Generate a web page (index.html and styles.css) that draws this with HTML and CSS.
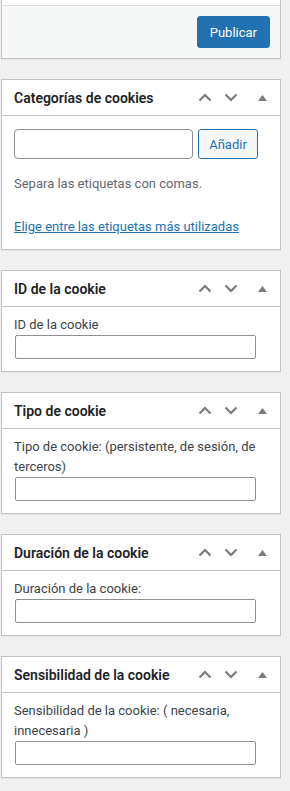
FILE: index.html
```html
<!DOCTYPE html>
<html lang="es">
<head>
  <meta charset="UTF-8">
  <title>Cookie | Editar</title>
  <meta name="viewport" content="width=device-width, initial-scale=1.0">
  <link rel="stylesheet" href="styles.css">
</head>
<body>
  <div class="sidebar">

    <!-- PUBLISH -->
    <div class="postbox submitbox">
      <div class="misc-actions"></div>
      <div class="publishing-actions">
        <button class="button-primary">Publicar</button>
      </div>
    </div>

    <!-- CATEGORIES -->
    <div class="postbox">
      <div class="postbox-header">
        <h2>Categorías de cookies</h2>
        <div class="handle-actions">
          <button class="handle-order"><svg width="14" height="9" viewBox="0 0 14 9"><polyline points="1.5,7.5 7,2 12.5,7.5" /></svg></button>
          <button class="handle-order"><svg width="14" height="9" viewBox="0 0 14 9"><polyline points="1.5,1.5 7,7 12.5,1.5" /></svg></button>
          <button class="toggle-indicator"><svg width="9" height="6" viewBox="0 0 9 6"><polygon points="0,6 4.5,0 9,6" /></svg></button>
        </div>
      </div>
      <div class="inside tags">
        <div class="tag-row">
          <input type="text" class="newtag">
          <button class="button">Añadir</button>
        </div>
        <p class="howto">Separa las etiquetas con comas.</p>
        <p class="tagcloud-link"><a href="#">Elige entre las etiquetas más utilizadas</a></p>
      </div>
    </div>

    <!-- ID -->
    <div class="postbox">
      <div class="postbox-header">
        <h2>ID de la cookie</h2>
        <div class="handle-actions">
          <button class="handle-order"><svg width="14" height="9" viewBox="0 0 14 9"><polyline points="1.5,7.5 7,2 12.5,7.5" /></svg></button>
          <button class="handle-order"><svg width="14" height="9" viewBox="0 0 14 9"><polyline points="1.5,1.5 7,7 12.5,1.5" /></svg></button>
          <button class="toggle-indicator"><svg width="9" height="6" viewBox="0 0 9 6"><polygon points="0,6 4.5,0 9,6" /></svg></button>
        </div>
      </div>
      <div class="inside field">
        <label for="cookie_id">ID de la cookie</label>
        <input type="text" id="cookie_id">
      </div>
    </div>

    <!-- TIPO -->
    <div class="postbox">
      <div class="postbox-header">
        <h2>Tipo de cookie</h2>
        <div class="handle-actions">
          <button class="handle-order"><svg width="14" height="9" viewBox="0 0 14 9"><polyline points="1.5,7.5 7,2 12.5,7.5" /></svg></button>
          <button class="handle-order"><svg width="14" height="9" viewBox="0 0 14 9"><polyline points="1.5,1.5 7,7 12.5,1.5" /></svg></button>
          <button class="toggle-indicator"><svg width="9" height="6" viewBox="0 0 9 6"><polygon points="0,6 4.5,0 9,6" /></svg></button>
        </div>
      </div>
      <div class="inside field">
        <label for="cookie_type">Tipo de cookie: (persistente, de sesión, de terceros)</label>
        <input type="text" id="cookie_type">
      </div>
    </div>

    <!-- DURACION -->
    <div class="postbox">
      <div class="postbox-header">
        <h2>Duración de la cookie</h2>
        <div class="handle-actions">
          <button class="handle-order"><svg width="14" height="9" viewBox="0 0 14 9"><polyline points="1.5,7.5 7,2 12.5,7.5" /></svg></button>
          <button class="handle-order"><svg width="14" height="9" viewBox="0 0 14 9"><polyline points="1.5,1.5 7,7 12.5,1.5" /></svg></button>
          <button class="toggle-indicator"><svg width="9" height="6" viewBox="0 0 9 6"><polygon points="0,6 4.5,0 9,6" /></svg></button>
        </div>
      </div>
      <div class="inside field">
        <label for="cookie_duration">Duración de la cookie:</label>
        <input type="text" id="cookie_duration">
      </div>
    </div>

    <!-- SENSIBILIDAD -->
    <div class="postbox">
      <div class="postbox-header">
        <h2>Sensibilidad de la cookie</h2>
        <div class="handle-actions">
          <button class="handle-order"><svg width="14" height="9" viewBox="0 0 14 9"><polyline points="1.5,7.5 7,2 12.5,7.5" /></svg></button>
          <button class="handle-order"><svg width="14" height="9" viewBox="0 0 14 9"><polyline points="1.5,1.5 7,7 12.5,1.5" /></svg></button>
          <button class="toggle-indicator"><svg width="9" height="6" viewBox="0 0 9 6"><polygon points="0,6 4.5,0 9,6" /></svg></button>
        </div>
      </div>
      <div class="inside field">
        <label for="cookie_sens">Sensibilidad de la cookie: ( necesaria, innecesaria )</label>
        <input type="text" id="cookie_sens">
      </div>
    </div>

  </div>
</body>
</html>
```

FILE: styles.css
```css
body {
  margin: 0;
  background: #f0f0f1;
  font-family: -apple-system, BlinkMacSystemFont, "Segoe UI", Roboto, "Liberation Sans", sans-serif;
  font-size: 13px;
  color: #3c434a;
}
.sidebar {
  width: 280px;
  margin-left: 1px;
}
.postbox {
  background: #fff;
  border: 1px solid #c3c4c7;
  box-shadow: 0 1px 1px rgba(0, 0, 0, 0.04);
  margin-bottom: 20px;
}
.submitbox {
  border-top: none;
  margin-bottom: 20px;
}
.misc-actions {
  height: 5px;
}
.publishing-actions {
  border-top: 1px solid #dcdcde;
  background: #f6f7f7;
  padding: 10px;
  display: flex;
  justify-content: flex-end;
}
button {
  font-family: inherit;
  cursor: pointer;
}
.button-primary {
  background: #2271b1;
  border: 1px solid #2271b1;
  color: #fff;
  font-size: 13px;
  height: 32px;
  padding: 0 12px;
  border-radius: 3px;
}
.postbox-header {
  display: flex;
  align-items: center;
  justify-content: space-between;
  height: 36px;
  box-sizing: border-box;
  border-bottom: 1px solid #c3c4c7;
}
.postbox-header h2 {
  margin: 0;
  padding: 0 12px;
  font-size: 14px;
  font-weight: 600;
  color: #1d2327;
  white-space: nowrap;
}
.handle-actions {
  display: flex;
  height: 100%;
}
.handle-actions button {
  background: none;
  border: none;
  padding: 0;
  height: 100%;
  display: flex;
  align-items: center;
  justify-content: center;
}
.handle-order {
  width: 26px;
}
.toggle-indicator {
  width: 36px;
}
.handle-order polyline {
  fill: none;
  stroke: #787c82;
  stroke-width: 2.2;
}
.toggle-indicator polygon {
  fill: #787c82;
}
.inside {
  padding: 0 12px 13px;
}
.tag-row {
  display: flex;
  gap: 5px;
  margin-top: 13px;
}
.newtag {
  width: 179px;
  height: 30px;
  box-sizing: border-box;
  border: 1px solid #8c8f94;
  border-radius: 4px;
  margin: 0;
}
.button {
  height: 30px;
  width: 60px;
  padding: 0;
  font-size: 13px;
  color: #2271b1;
  background: #f6f7f7;
  border: 1px solid #2271b1;
  border-radius: 3px;
}
.howto {
  margin: 15px 0 0;
  line-height: 19px;
  color: #646970;
}
.tagcloud-link {
  margin: 24px 0 0;
  line-height: 19px;
}
.tagcloud-link a {
  color: #2271b1;
  text-decoration: underline;
}
.field {
  padding: 8px 12px 12px;
}
.field label {
  display: block;
  line-height: 20px;
  color: #3c434a;
}
.field input {
  display: block;
  width: 95%;
  height: 24px;
  box-sizing: border-box;
  margin: 0 0 0 1px;
  border: 1px solid #8c8f94;
  border-radius: 2px;
}
```
